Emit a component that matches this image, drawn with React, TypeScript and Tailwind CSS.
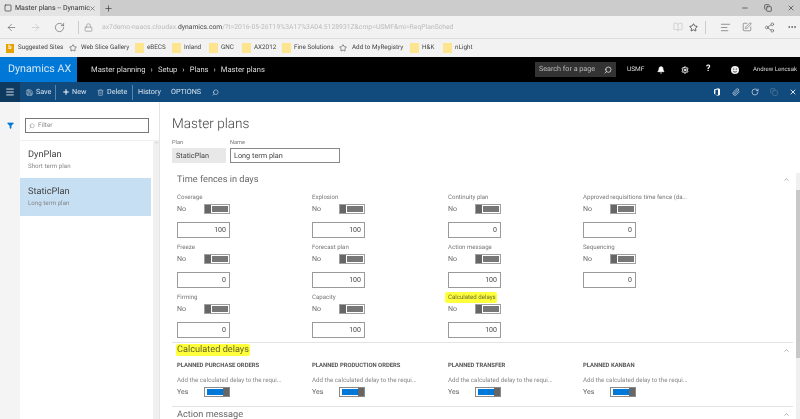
import { Menu, Save, Plus, Trash2, Search, Filter, Bell, Settings, X, RotateCw, Paperclip, Star, ArrowLeft, ArrowRight, Lock, Minus, Copy, ChevronUp, BookOpen, MoreHorizontal, AlignLeft, SquarePen, Share2, Square } from "lucide-react";

const fences = [
  { label: "Coverage", value: "100" },
  { label: "Explosion", value: "100" },
  { label: "Continuity plan", value: "0" },
  { label: "Approved requisitions time fence (da...", value: "0" },
  { label: "Freeze", value: "0" },
  { label: "Forecast plan", value: "100" },
  { label: "Action message", value: "100" },
  { label: "Sequencing", value: "0" },
  { label: "Firming", value: "0" },
  { label: "Capacity", value: "100" },
  { label: "Calculated delays", value: "100", mark: true },
];

const delays = ["PLANNED PURCHASE ORDERS", "PLANNED PRODUCTION ORDERS", "PLANNED TRANSFER", "PLANNED KANBAN"];

const bookmarks = [
  { label: "eBECS", w: "w-[25px]" },
  { label: "Inland", w: "w-[25px]" },
  { label: "GNC", w: "w-[21px]" },
  { label: "AX2012", w: "w-[28px]" },
  { label: "Fine Solutions", w: "w-[45px]" },
];

function Toggle({ on }: { on?: boolean }) {
  if (on) {
    return (
      <div className="flex h-[10px] w-[26px] items-center border border-[#8a8a8a] bg-white pl-[2px]">
        <div className="h-[6px] flex-1 bg-[#0078d7]" />
        <div className="h-full w-[6px] shrink-0 bg-[#666]" />
      </div>
    );
  }
  return (
    <div className="flex h-[10px] w-[26px] items-center border border-[#a0a0a0] bg-white">
      <div className="h-full w-[6px] shrink-0 bg-[#666]" />
      <div className="mx-px h-[6px] flex-1 bg-[#777]" />
    </div>
  );
}

function FolderIcon() {
  return <div className="h-[10px] w-[9px] shrink-0 bg-[#fde48e]" />;
}

function Field({ label, value, mark }: { label: string; value: string; mark?: boolean }) {
  return (
    <div className="h-[50px]">
      <div className={`h-[11px] whitespace-nowrap text-[6.1px] leading-[11px] ${mark ? "-mx-[3px] w-[52px] rounded-[2px] bg-[#ffff3c] px-[3px] text-[#6b6b30]" : "text-[#777]"}`}>{label}</div>
      <div className="flex h-[12px] w-[53px] items-center justify-between">
        <span className="text-[7px] text-[#666]">No</span>
        <Toggle />
      </div>
      <div className="mt-[7px] h-[16px] w-[53px] border border-[#9a9a9a] bg-white pr-[3px] text-right text-[7px] leading-[14px] text-[#444]">{value}</div>
    </div>
  );
}

export default function App() {
  return (
    <div className="flex h-[419px] w-[800px] flex-col overflow-hidden bg-white font-['Roboto',sans-serif] blur-[0.4px] [text-rendering:geometricPrecision]">
      {/* browser chrome */}
      <div className="flex h-[16px] items-center bg-[#cccccc]">
        <div className="flex h-full w-[100px] items-center bg-[#e4e4e4] pl-[4px]">
          <Square size={8} className="shrink-0 text-[#333]" />
          <span className="ml-[3px] w-[73px] whitespace-nowrap text-[7px] text-[#333]">Master plans -- Dynamic</span>
          <X size={7} className="ml-[1px] shrink-0 text-[#555]" />
        </div>
        <Plus size={9} className="ml-[4px] shrink-0 text-[#444]" />
        <div className="ml-auto flex items-center gap-[15px] pr-[5px] text-[#333]">
          <Minus size={8} />
          <Copy size={8} />
          <X size={8} />
        </div>
      </div>
      <div className="flex h-[22px] items-center bg-[#f2f2f2] pl-[6px] pr-[3px] text-[#555]">
        <ArrowLeft size={11} strokeWidth={1.3} className="shrink-0" />
        <ArrowRight size={11} strokeWidth={1.3} className="ml-[13px] shrink-0 text-[#bbb]" />
        <RotateCw size={11} strokeWidth={1.3} className="ml-[13px] shrink-0" />
        <div className="ml-[13px] h-[13px] w-px shrink-0 bg-[#ccc]" />
        <Lock size={9} className="ml-[5px] shrink-0 text-[#999]" />
        <div className="ml-[9px] whitespace-nowrap text-[6.8px] text-[#bbb]">
          ax7demo-naaos.cloudax.<span className="text-[#444]">dynamics.com</span>/?t=2016-05-26T19%3A17%3A04.5128931Z&amp;cmp=USMF&amp;mi=ReqPlanSched
        </div>
        <div className="ml-auto flex items-center">
          <BookOpen size={10} className="text-[#ccc]" />
          <Star size={9} className="ml-[6px] text-[#333]" />
          <div className="ml-[7px] h-[13px] w-px bg-[#ccc]" />
          <AlignLeft size={11} strokeWidth={1.3} className="ml-[14px]" />
          <SquarePen size={10} strokeWidth={1.3} className="ml-[11px]" />
          <Share2 size={11} strokeWidth={1.3} className="ml-[12px]" />
          <MoreHorizontal size={10} className="ml-[12px]" />
        </div>
      </div>
      <div className="flex h-[19px] items-center border-t border-[#dcdcdc] bg-[#f2f2f2] pl-[6px] text-[6.3px] text-[#444]">
        <div className="flex h-[9px] w-[8px] shrink-0 items-center justify-center bg-[#e8a200] text-[6px] font-bold leading-none text-white">b</div>
        <span className="ml-[4px] w-[51px] whitespace-nowrap">Suggested Sites</span>
        <Star size={8} className="shrink-0 text-[#555]" />
        <span className="ml-[4px] w-[54px] whitespace-nowrap">Web Slice Gallery</span>
        {bookmarks.map((b) => (
          <div key={b.label} className="flex items-center">
            <FolderIcon />
            <span className={`ml-[3px] ${b.w} whitespace-nowrap`}>{b.label}</span>
          </div>
        ))}
        <Star size={8} className="shrink-0 text-[#555]" />
        <span className="ml-[5px] w-[58px] whitespace-nowrap">Add to MyRegistry</span>
        <FolderIcon />
        <span className="ml-[3px] w-[21px]">H&amp;K</span>
        <FolderIcon />
        <span className="ml-[3px]">nLight</span>
      </div>

      {/* AX nav */}
      <div className="flex h-[25px] items-center bg-black text-white">
        <div className="flex h-full w-[77px] shrink-0 items-center bg-[#0078d7] pl-[8px] text-[10.7px] text-[#d5e8f8]">Dynamics AX</div>
        <div className="ml-[14px] flex items-center gap-[5px] text-[7.6px] text-[#ddd]">
          <span>Master planning</span><span>›</span><span>Setup</span><span>›</span><span>Plans</span><span>›</span><span>Master plans</span>
        </div>
        <div className="ml-auto flex h-[15px] w-[81px] shrink-0 items-center justify-between bg-[#333] px-[4px] text-[7.2px] text-[#bbb]">
          <span>Search for a page</span>
          <Search size={8} className="-scale-x-100 text-white" />
        </div>
        <span className="ml-[11px] w-[15px] text-[6.5px] text-[#ddd]">USMF</span>
        <Bell size={8} fill="white" className="ml-[15px] shrink-0" />
        <Settings size={8} strokeWidth={3} className="ml-[16px] shrink-0" />
        <span className="ml-[17px] w-[5px] text-[9px] font-bold">?</span>
        <svg width="8" height="8" viewBox="0 0 8 8" className="ml-[20px] shrink-0">
          <circle cx="4" cy="4" r="4" fill="#eee" />
          <circle cx="2.7" cy="3" r=".6" fill="#000" />
          <circle cx="5.3" cy="3" r=".6" fill="#000" />
          <path d="M2.2 5a2 2 0 0 0 3.6 0" stroke="#000" strokeWidth=".6" fill="none" />
        </svg>
        <span className="ml-[14px] whitespace-nowrap pr-[3px] text-[6px] text-[#ddd]">Andrew Lencsak</span>
      </div>
      <div className="flex h-[20px] items-center bg-[#114a7c] text-[7.2px] text-[#d8e4ee]">
        <div className="flex h-full w-[20px] shrink-0 items-center justify-center bg-[#0e3a60]"><Menu size={10} className="text-white" /></div>
        <Save size={7} className="ml-[6px] shrink-0" />
        <span className="ml-[3px] w-[19px]">Save</span>
        <div className="h-[15px] w-px shrink-0 bg-[#5a83a8]" />
        <Plus size={8} strokeWidth={3} className="ml-[6px] shrink-0 text-white" />
        <span className="ml-[2px] w-[25px]">New</span>
        <Trash2 size={7} className="shrink-0 text-[#a9c0d4]" />
        <span className="ml-[3px] w-[25px]">Delete</span>
        <div className="h-[15px] w-px shrink-0 bg-[#5a83a8]" />
        <span className="ml-[5px] w-[33px]">History</span>
        <span className="w-[41px]">OPTIONS</span>
        <Search size={7} className="-scale-x-100" />
        <div className="ml-auto flex items-center gap-[11px] pr-[3px]">
          <svg width="8" height="8" viewBox="0 0 8 8">
            <path d="M1 1.6 5 .3l2 .6v6.2l-2 .6-4-1.3 4 .5V1.4L2.4 2v3.6L1 6.2z" fill="white" />
          </svg>
          <Paperclip size={8} />
          <RotateCw size={8} />
          <Copy size={8} className="text-[#5a7f9f]" />
          <X size={8} strokeWidth={3} />
        </div>
      </div>

      {/* body */}
      <div className="flex min-h-0 flex-1">
        <div className="flex w-[20px] shrink-0 flex-col items-center bg-[#f4f4f4] pt-[20px]">
          <Filter size={7} fill="#0078d7" className="text-[#0078d7]" />
        </div>
        <div className="flex w-[140px] shrink-0 border-r border-[#e4e4e4]">
          <div className="w-[133px]">
            <div className="border-b border-[#eee] pb-[7px] pl-[5px] pt-[16px]">
              <div className="flex h-[15px] w-[124px] items-center border border-[#777] pl-[3px] text-[6.5px] text-[#888]">
                <Search size={6} className="-scale-x-100" />
                <span className="ml-[3px]">Filter</span>
              </div>
            </div>
            <div className="h-[37px] pl-[8px] pt-[7px]">
              <div className="text-[9.2px] leading-[14px] text-[#444]">DynPlan</div>
              <div className="text-[6.2px] leading-[9px] text-[#888]">Short term plan</div>
            </div>
            <div className="h-[38px] w-[131px] bg-[#c6dff3] pl-[8px] pt-[7px]">
              <div className="text-[9.2px] leading-[14px] text-[#444]">StaticPlan</div>
              <div className="text-[6.2px] leading-[9px] text-[#888]">Long term plan</div>
            </div>
          </div>
          <div className="mt-[38px] flex w-[6px] flex-1 justify-center bg-[#f0f0f0]">
            <ChevronUp size={5} className="text-[#999]" />
          </div>
        </div>

        <div className="relative min-w-0 flex-1 pl-[12px]">
          <div className="mt-[12px] text-[13.6px] font-light leading-[21px] text-[#444]">Master plans</div>
          <div className="mt-[4px] flex gap-[4px]">
            <div>
              <div className="text-[5.6px] leading-[9px] text-[#777]">Plan</div>
              <div className="h-[15px] w-[54px] bg-[#e8e8e8] pl-[4px] text-[7.3px] leading-[15px] text-[#444]">StaticPlan</div>
            </div>
            <div>
              <div className="text-[5.6px] leading-[9px] text-[#777]">Name</div>
              <div className="h-[15px] w-[110px] border border-[#888] pl-[3px] text-[7.3px] leading-[13px] text-[#444]">Long term plan</div>
            </div>
          </div>

          <div className="ml-[5px] mr-[7px] mt-[9px]">
            <div className="flex h-[15px] items-center justify-between">
              <span className="text-[9.2px] text-[#666]">Time fences in days</span>
              <ChevronUp size={7} className="mr-[3px] text-[#777]" />
            </div>
            <div className="mt-[5px] grid grid-cols-[135px_136px_135px_1fr]">
              {fences.map((f) => (
                <Field key={f.label} {...f} />
              ))}
            </div>
          </div>

          <div className="mr-[7px] border-t border-[#e2e2e2] pl-[5px]">
            <div className="flex h-[14px] items-center justify-between">
              <span className="-ml-[1px] rounded-[2px] bg-[#ffff3c] px-[1px] text-[9.2px] leading-[12px] text-[#66662a]">Calculated delays</span>
              <ChevronUp size={7} className="mr-[3px] text-[#777]" />
            </div>
            <div className="mt-[5px] grid h-[44px] grid-cols-[135px_136px_135px_1fr]">
              {delays.map((d) => (
                <div key={d}>
                  <div className="whitespace-nowrap text-[5.9px] font-bold leading-[9px] text-[#555]">{d}</div>
                  <div className="mt-[5px] whitespace-nowrap text-[6.2px] leading-[9px] text-[#888]">Add the calculated delay to the requi...</div>
                  <div className="mt-[1px] flex h-[12px] w-[53px] items-center justify-between">
                    <span className="text-[7px] text-[#666]">Yes</span>
                    <Toggle on />
                  </div>
                </div>
              ))}
            </div>
          </div>
          <div className="mr-[7px] border-t border-[#e2e2e2] pl-[5px]">
            <div className="flex h-[15px] items-center justify-between">
              <span className="text-[9.2px] text-[#666]">Action message</span>
              <ChevronUp size={7} className="mr-[3px] text-[#777]" />
            </div>
          </div>

          <div className="absolute bottom-0 right-0 top-[71px] w-[4px] bg-[#f0f0f0]">
            <div className="mt-[17px] h-[168px] bg-[#c8c8c8]" />
          </div>
        </div>
      </div>
    </div>
  );
}
